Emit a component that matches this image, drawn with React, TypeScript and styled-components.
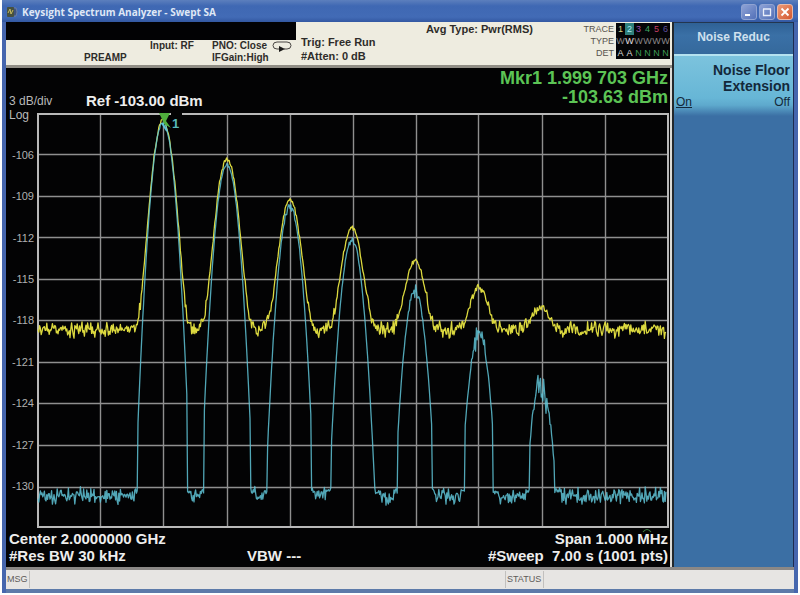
import React from "react";
import styled, { createGlobalStyle } from "styled-components";

const GlobalStyle = createGlobalStyle`
  * { box-sizing: border-box; }
  html, body, #root { height: 100%; }
  body { margin: 0; background: #fff; font-family: "Liberation Sans", Arial, sans-serif; }
  button { font-family: inherit; }
`;

/* ---------- window frame ---------- */

const Page = styled.div`
  height: 100vh;
  min-height: 420px;
  padding: 0 2px 2px;
`;

const Window = styled.div`
  height: 100%;
  display: flex;
  flex-direction: column;
  background: #4666ae;
`;

const TitleBar = styled.header`
  flex: none;
  height: 22px;
  padding: 2px 5px 0 5px;
  display: flex;
  align-items: center;
  gap: 4px;
  background: linear-gradient(#5c7fbd 0, #3f68b3 6px, #426bb6 17px, #3358a2 100%);
`;

const Title = styled.h1`
  flex: 1;
  margin: 0;
  font: 700 10px/14px "Open Sans", "Noto Sans", sans-serif;
  color: #dfe7f5;
  white-space: nowrap;
`;

const WindowButtons = styled.div`
  display: flex;
  gap: 2px;
`;

const WindowButton = styled.button<{ $close?: boolean }>`
  width: 16px;
  height: 16px;
  padding: 0;
  display: grid;
  place-items: center;
  border: 1px solid ${(p) => (p.$close ? "#e8b9a8" : "#8fa3d2")};
  border-radius: 3px;
  background: ${(p) =>
    p.$close
      ? "linear-gradient(135deg, #ec9a78, #d4582f)"
      : "linear-gradient(135deg, #8fa3d6, #5270b8)"};
`;

const Body = styled.div`
  flex: 1;
  min-height: 0;
  margin: 0 4px;
  display: flex;
  border-bottom: 3px solid #8b8886;
`;

const Instrument = styled.main`
  flex: 1;
  min-width: 0;
  display: flex;
  flex-direction: column;
  border-right: 2px solid #23282c;
`;

/* ---------- measurement bar ---------- */

const MeasureBar = styled.section`
  flex: none;
  height: 46px;
  display: flex;
  background: #eeece0;
  border-bottom: 3px solid #918e86;
  color: #2e2c2a;
`;

const InputGroup = styled.div`
  flex: 0 1 290px;
`;

const BlankStrip = styled.div`
  height: 18px;
  background: #020204;
`;

const InputSettings = styled.div`
  display: grid;
  grid-template-columns: 66px 62px 60px auto;
  padding-left: 78px;
  font: 700 10px/12px "Liberation Sans", Arial, sans-serif;
  white-space: nowrap;
`;

const SettingColumn = styled.div<{ $low?: boolean }>`
  padding-top: ${(p) => (p.$low ? 12 : 0)}px;
`;

const TriggerSettings = styled.div`
  flex: 0 1 130px;
  padding: 13px 0 0 5px;
  font: 700 11px/14px "Liberation Sans", Arial, sans-serif;
  white-space: nowrap;
`;

const AverageType = styled.div`
  flex: 1;
  font: 700 11px/14px "Liberation Sans", Arial, sans-serif;
  white-space: nowrap;
`;

const TraceTable = styled.table`
  align-self: flex-start;
  margin: 1px 2px 0 0;
  border-collapse: collapse;
  font-size: 9px;
  line-height: 12px;

  th, td { padding: 0; height: 12px; }
  th { padding-right: 2px; font-weight: 400; text-align: right; color: #57534e; }
`;

const TraceCell = styled.td<{ $color: string; $selected?: boolean }>`
  width: 9px;
  text-align: center;
  color: ${(p) => p.$color};
  background: ${(p) => (p.$selected ? "#2f7f7c" : "#050507")};
`;

/* ---------- display ---------- */

const Display = styled.section`
  flex: 1;
  min-height: 0;
  display: flex;
  flex-direction: column;
  background: #030304;
  border-right: 2px solid #dcdbd6;
`;

const Readouts = styled.div`
  flex: none;
  height: 39px;
  padding: 2px 2px 0 3px;
  display: flex;
  align-items: flex-end;
  white-space: nowrap;
`;

const ScalePerDivision = styled.div`
  flex: 0 0 77px;
  font-size: 12px;
  line-height: 12px;
  color: #b9b9b9;
`;

const RefLevel = styled.div`
  flex: 1;
  font: 700 15px/13px "Liberation Sans", Arial, sans-serif;
  color: #ededed;
`;

const MarkerReadout = styled.div`
  font: 700 18px/19px "Liberation Sans", Arial, sans-serif;
  text-align: right;
  color: #5cc455;
`;

const PlotRow = styled.div`
  flex: 1;
  min-height: 0;
  display: flex;
`;

const Axis = styled.div`
  flex: 0 0 31px;
  display: flex;
  flex-direction: column;
  color: #b0b0b0;
`;

const AxisUnit = styled.div`
  padding: 2px 0 0 3px;
  font-size: 12px;
  line-height: 12px;
  color: #b9b9b9;
`;

const AxisTicks = styled.div`
  flex: 1;
  margin: 13px 3px 22px 0;
  display: grid;
  grid-auto-rows: 1fr;
  align-items: center;
  text-align: right;
  font-size: 11px;
  line-height: 12px;
`;

const PlotArea = styled.div`
  flex: 1;
  min-width: 0;
  margin: 6px 1px 1px 0;

  svg { display: block; width: 100%; height: 100%; overflow: visible; }
`;

const SweepInfo = styled.footer`
  flex: none;
  padding: 1px 2px 3px 3px;
  display: grid;
  grid-template-columns: 238px 1fr auto;
  font: 700 15px/17px "Liberation Sans", Arial, sans-serif;
  color: #ededed;
  white-space: pre;
`;

const SweepValue = styled.div<{ $right?: boolean }>`
  text-align: ${(p) => (p.$right ? "right" : "left")};
`;

/* ---------- softkey menu ---------- */

const SoftkeyMenu = styled.aside`
  flex: 0 0 120px;
  border-top: 1px solid #23364f;
  border-right: 1px solid #1e2c50;
  background: #3b6fa4;
`;

const MenuTitle = styled.h2`
  margin: 0;
  height: 31px;
  font-size: 12px;
  font-weight: 700;
  line-height: 29px;
  text-align: center;
  color: #cfe0ee;
  background: linear-gradient(#2f6195, #3a70a6 40%, #35699c);
`;

const Softkey = styled.button`
  width: 100%;
  height: 62px;
  padding: 6px 3px 8px 2px;
  display: flex;
  flex-direction: column;
  align-items: stretch;
  border: 0;
  border-top: 2px solid #b5e2ef;
  text-align: right;
  font-size: 14px;
  font-weight: 700;
  line-height: 16px;
  color: #13283a;
  background: linear-gradient(#7cc3dd 0, #67b6d6 70%, #5ea9cd 82%, #3b6fa4 100%);
`;

const SoftkeyStates = styled.span`
  display: flex;
  justify-content: space-between;
  font-size: 12px;
  font-weight: 400;
`;

const ActiveState = styled.span`
  text-decoration: underline;
`;

/* ---------- status bar ---------- */

const StatusBar = styled.footer`
  flex: none;
  height: 23px;
  margin: 0 4px;
  display: grid;
  grid-template-columns: 24px 476px 38px 1fr;
  background: #e7e5e3;
  border-bottom: 4px solid #5d7aa9;
  font-size: 9px;
  color: #5e5b59;
`;

const StatusCell = styled.div<{ $last?: boolean }>`
  padding-left: 1px;
  margin: 1px 0;
  line-height: 17px;
  border-right: ${(p) => (p.$last ? "0" : "1px solid #c2c0be")};
`;

/* ---------- traces ---------- */

type Point = [number, number];

const PLOT_W = 632;
const PLOT_H = 415;
const PX_PER_DB = 13.83;
const FILTER_CURVE = 0.48;
const FLOOR_UPPER = 217;
const FLOOR_LOWER = 383;
const V_LINES = [63, 126, 190, 253, 316, 379, 441, 505, 568];
const H_LINES = [41, 83, 124, 166, 207, 249, 290, 332, 374];

function makeNoise(seed: number) {
  let s = seed;
  const next = () => {
    s = (s * 16807) % 2147483647;
    return (s / 2147483647) * 2 - 1;
  };
  return () => (next() + next()) / 2;
}

function toPath(points: Point[]) {
  return points.map(([x, y], i) => `${i ? "L" : "M"}${x.toFixed(1)} ${y.toFixed(1)}`).join("");
}

type Tone = {
  center: number;
  upper: number;
  lower: number;
  left: number;
  right: number;
  jitter: number;
};

const TONES: Tone[] = [
  { center: 126, upper: 7, lower: 9, left: 101, right: 150, jitter: 2 },
  { center: 190, upper: 46, lower: 51, left: 167, right: 213, jitter: 3 },
  { center: 253, upper: 87, lower: 93, left: 230, right: 274, jitter: 6 },
  { center: 315, upper: 115, lower: 127, left: 294, right: 338, jitter: 4 },
  { center: 378, upper: 148, lower: 179, left: 361, right: 395, jitter: 9 },
  { center: 442, upper: 175, lower: 222, left: 428, right: 456, jitter: 15 },
  { center: 504, upper: 193, lower: 270, left: 493, right: 517, jitter: 30 },
];

function upperTrace() {
  const noise = makeNoise(4211);
  const points: Point[] = [];
  for (let i = 0; i <= 785; i += 1) {
    const x = 1 + i * 0.8;
    let power = 1;
    for (const t of TONES) {
      const level = Math.pow(10, (FLOOR_UPPER - t.upper) / PX_PER_DB / 10) - 1;
      power += level * Math.pow(10, (-FILTER_CURVE * (x - t.center) ** 2) / PX_PER_DB / 10);
    }
    const lift = 10 * Math.log10(power) * PX_PER_DB;
    const amp = lift > 60 ? 3 : 9 - lift / 10;
    points.push([x, FLOOR_UPPER - lift + noise() * amp]);
  }
  return toPath(points);
}

function lowerTrace() {
  const noise = makeNoise(90731);
  const points: Point[] = [];
  for (let i = 0; i <= 785; i += 1) {
    const x = 1 + i * 0.8;
    const tone = TONES.find((t) => x >= t.left && x <= t.right);
    if (tone) {
      const dx = x - tone.center;
      const amp = Math.abs(dx) < 6 ? tone.jitter : 1 + tone.jitter / 8;
      const y = tone.lower + FILTER_CURVE * dx * dx + noise() * amp;
      points.push([x, Math.min(y, 375)]);
    } else {
      const edge = Math.min(...TONES.map((t) => Math.min(Math.abs(x - t.left), Math.abs(x - t.right))));
      points.push([x, FLOOR_LOWER - (edge < 4 ? 5 : 0) + noise() * (edge < 4 ? 4 : 10)]);
    }
  }
  return toPath(points);
}

const UPPER_PATH = upperTrace();
const LOWER_PATH = lowerTrace();

function SpectrumPlot() {
  return (
    <svg viewBox={`0 0 ${PLOT_W} ${PLOT_H}`} preserveAspectRatio="none" role="img" aria-label="Spectrum traces">
      <g stroke="#8f8f8f" strokeWidth="1.4" fill="none">
        {V_LINES.map((x) => <path key={x} d={`M${x + 0.5} 1V414`} />)}
        {H_LINES.map((y) => <path key={y} d={`M1 ${y + 0.5}H631`} />)}
      </g>
      <rect x="1" y="1" width="630" height="413" fill="none" stroke="#b9b9b9" strokeWidth="2" />
      <rect x="134" y="-1" width="11" height="4" fill="#030304" />
      <path d={UPPER_PATH} fill="none" stroke="#dcd93f" strokeWidth="1.3" strokeLinejoin="round" />
      <path d={LOWER_PATH} fill="none" stroke="#5fc3d6" strokeOpacity="0.85" strokeWidth="1.3" strokeLinejoin="round" />
      <path d="M122 0H133L129 8L134 15L127 11L125 6Z" fill="#4fae3c" />
      <path d="M125 10L130 18" stroke="#5fc3d6" strokeWidth="2" />
      <text x="135" y="15" fontFamily="Liberation Sans, Arial, sans-serif" fontSize="13" fontWeight="700" fill="#58b9bb">1</text>
      <path d="M606 419Q610 414 614 419" fill="none" stroke="#3d7a44" strokeWidth="1.2" />
    </svg>
  );
}

function AppIcon() {
  return (
    <svg width="11" height="10" viewBox="0 0 11 10" aria-hidden="true">
      <rect width="7" height="10" rx="1" fill="#47513f" />
      <path d="M1 6L3 2L4 7L6 3" fill="none" stroke="#c8bd62" strokeWidth="1" />
      <path d="M7 1H9Q11 5 9 9H7" fill="#3f5480" stroke="#7f8ea9" strokeWidth="0.7" />
    </svg>
  );
}

function LoopIcon() {
  return (
    <svg width="20" height="12" viewBox="0 0 20 12" aria-hidden="true">
      <path d="M7 9H5Q1 9 1 5.500Q1 2 5 2H15Q19 2 19 5.500Q19 9 15 9H12" fill="none" stroke="#4a4744" strokeWidth="1" />
      <path d="M7 6L13 9L7 12Z" fill="#1c1b1a" />
    </svg>
  );
}

const TRACES = [
  { id: "1", det: "A", color: "#d8d488", detColor: "#dededa" },
  { id: "2", det: "A", color: "#a5eaf0", detColor: "#dededa", selected: true },
  { id: "3", det: "N", color: "#a04fae", detColor: "#3f9a55" },
  { id: "4", det: "N", color: "#3fa964", detColor: "#3f9a55" },
  { id: "5", det: "N", color: "#c43d63", detColor: "#3f9a55" },
  { id: "6", det: "N", color: "#5d4f9c", detColor: "#3f9a55" },
];

const TICKS = [-106, -109, -112, -115, -118, -121, -124, -127, -130];

export default function App() {
  return (
    <Page>
      <GlobalStyle />
      <Window>
        <TitleBar>
          <AppIcon />
          <Title>Keysight Spectrum Analyzer - Swept SA</Title>
          <WindowButtons>
            <WindowButton aria-label="Minimize">
              <svg width="10" height="10" viewBox="0 0 10 10"><path d="M1 8H6" stroke="#fff" strokeWidth="2" /></svg>
            </WindowButton>
            <WindowButton aria-label="Maximize">
              <svg width="10" height="10" viewBox="0 0 10 10">
                <path d="M1 2H9M1.500 2V8.500H8.500V2" fill="none" stroke="#e9eefa" strokeWidth="1.3" />
              </svg>
            </WindowButton>
            <WindowButton $close aria-label="Close">
              <svg width="10" height="10" viewBox="0 0 10 10"><path d="M1.500 1.500L8.500 8.500M8.500 1.500L1.500 8.500" stroke="#fff" strokeWidth="1.8" /></svg>
            </WindowButton>
          </WindowButtons>
        </TitleBar>

        <Body>
          <Instrument>
            <MeasureBar>
              <InputGroup>
                <BlankStrip />
                <InputSettings>
                  <SettingColumn $low>PREAMP</SettingColumn>
                  <SettingColumn>Input: RF</SettingColumn>
                  <SettingColumn>PNO: Close<br />IFGain:High</SettingColumn>
                  <SettingColumn><LoopIcon /></SettingColumn>
                </InputSettings>
              </InputGroup>
              <TriggerSettings>Trig: Free Run<br />#Atten: 0 dB</TriggerSettings>
              <AverageType>Avg Type: Pwr(RMS)</AverageType>
              <TraceTable>
                <tbody>
                  <tr>
                    <th scope="row">TRACE</th>
                    {TRACES.map((t) => <TraceCell key={t.id} $color={t.color} $selected={t.selected}>{t.id}</TraceCell>)}
                  </tr>
                  <tr>
                    <th scope="row">TYPE</th>
                    {TRACES.map((t) => <TraceCell key={t.id} $color={t.selected ? "#e6e0e0" : "#8b8889"}>W</TraceCell>)}
                  </tr>
                  <tr>
                    <th scope="row">DET</th>
                    {TRACES.map((t) => <TraceCell key={t.id} $color={t.detColor}>{t.det}</TraceCell>)}
                  </tr>
                </tbody>
              </TraceTable>
            </MeasureBar>

            <Display>
              <Readouts>
                <ScalePerDivision>3 dB/div</ScalePerDivision>
                <RefLevel>Ref -103.00 dBm</RefLevel>
                <MarkerReadout>Mkr1 1.999 703 GHz<br />-103.63 dBm</MarkerReadout>
              </Readouts>
              <PlotRow>
                <Axis>
                  <AxisUnit>Log</AxisUnit>
                  <AxisTicks>
                    {TICKS.map((t) => <div key={t}>{t}</div>)}
                  </AxisTicks>
                </Axis>
                <PlotArea><SpectrumPlot /></PlotArea>
              </PlotRow>
              <SweepInfo>
                <SweepValue>Center 2.0000000 GHz</SweepValue>
                <span />
                <SweepValue $right>Span 1.000 MHz</SweepValue>
                <SweepValue>#Res BW 30 kHz</SweepValue>
                <SweepValue>VBW ---</SweepValue>
                <SweepValue $right>#Sweep  7.00 s (1001 pts)</SweepValue>
              </SweepInfo>
            </Display>
          </Instrument>

          <SoftkeyMenu>
            <MenuTitle>Noise Reduc</MenuTitle>
            <Softkey aria-pressed="true">
              <span>Noise Floor</span>
              <span>Extension</span>
              <SoftkeyStates><ActiveState>On</ActiveState><span>Off</span></SoftkeyStates>
            </Softkey>
          </SoftkeyMenu>
        </Body>

        <StatusBar>
          <StatusCell>MSG</StatusCell>
          <StatusCell />
          <StatusCell>STATUS</StatusCell>
          <StatusCell $last />
        </StatusBar>
      </Window>
    </Page>
  );
}
